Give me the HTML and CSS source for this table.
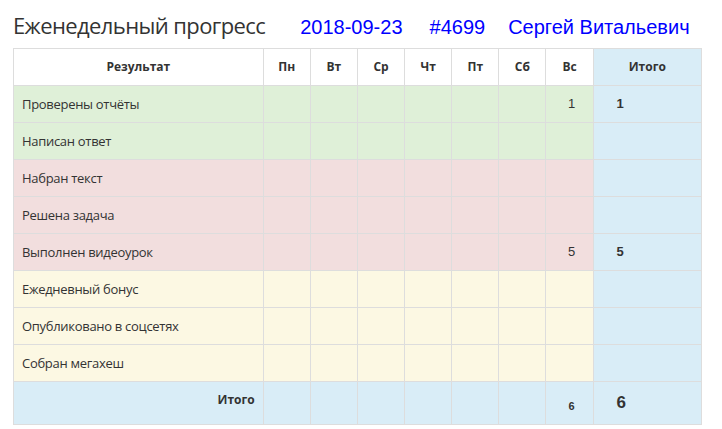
FILE: index.html
```html
<!DOCTYPE html>
<html lang="ru">

<head>
    <meta charset="utf-8" />
    <title>Еженедельный прогресс</title>
    <link rel="stylesheet" href="styles.css">
</head>

<body>
    <div class="page">
        <div class="heading">
            <span class="title">Еженедельный прогресс</span>
            <span class="meta date">2018-09-23</span>
            <span class="meta num">#4699</span>
            <span class="meta name">Сергей Витальевич</span>
        </div>
        <table class="progress">
            <colgroup>
                <col class="c-label">
                <col class="c-day">
                <col class="c-day">
                <col class="c-day">
                <col class="c-day">
                <col class="c-day">
                <col class="c-day">
                <col class="c-day">
                <col class="c-total">
            </colgroup>
            <thead>
                <tr>
                    <th>Результат</th>
                    <th>Пн</th>
                    <th>Вт</th>
                    <th>Ср</th>
                    <th>Чт</th>
                    <th>Пт</th>
                    <th>Сб</th>
                    <th>Вс</th>
                    <th class="info">Итого</th>
                </tr>
            </thead>
            <tbody>
                <tr class="success">
                    <td>Проверены отчёты</td>
                    <td></td><td></td><td></td><td></td><td></td><td></td>
                    <td class="num">1</td>
                    <td class="info total">1</td>
                </tr>
                <tr class="success">
                    <td>Написан ответ</td>
                    <td></td><td></td><td></td><td></td><td></td><td></td><td></td>
                    <td class="info total"></td>
                </tr>
                <tr class="danger">
                    <td>Набран текст</td>
                    <td></td><td></td><td></td><td></td><td></td><td></td><td></td>
                    <td class="info total"></td>
                </tr>
                <tr class="danger">
                    <td>Решена задача</td>
                    <td></td><td></td><td></td><td></td><td></td><td></td><td></td>
                    <td class="info total"></td>
                </tr>
                <tr class="danger">
                    <td>Выполнен видеоурок</td>
                    <td></td><td></td><td></td><td></td><td></td><td></td>
                    <td class="num">5</td>
                    <td class="info total">5</td>
                </tr>
                <tr class="warning">
                    <td>Ежедневный бонус</td>
                    <td></td><td></td><td></td><td></td><td></td><td></td><td></td>
                    <td class="info total"></td>
                </tr>
                <tr class="warning">
                    <td>Опубликовано в соцсетях</td>
                    <td></td><td></td><td></td><td></td><td></td><td></td><td></td>
                    <td class="info total"></td>
                </tr>
                <tr class="warning">
                    <td>Собран мегахеш</td>
                    <td></td><td></td><td></td><td></td><td></td><td></td><td></td>
                    <td class="info total"></td>
                </tr>
            </tbody>
            <tfoot>
                <tr class="info">
                    <th class="foot-label">Итого</th>
                    <td></td><td></td><td></td><td></td><td></td><td></td>
                    <td class="num small">6</td>
                    <td class="total big">6</td>
                </tr>
            </tfoot>
        </table>
    </div>
</body>

</html>
```

FILE: styles.css
```css
body {
    margin: 0;
    padding: 0;
    background: #fff;
    color: #333;
    font-family: "Open Sans", "Noto Sans", sans-serif;
    font-size: 13px;
}

.page {
    padding: 10px 13px;
}

.heading {
    display: flex;
    align-items: baseline;
    height: 38px;
    white-space: nowrap;
}

.title {
    font-size: 22px;
    letter-spacing: -0.6px;
    color: #333;
}

.meta {
    font-family: "Liberation Sans", Arial, sans-serif;
    font-size: 20px;
    color: #0000ff;
}

.date {
    margin-left: 35px;
}

.heading .num {
    margin-left: 27px;
}

.name {
    margin-left: 23px;
}

.progress {
    border-collapse: collapse;
    table-layout: fixed;
    width: 689px;
    border: 1px solid #ddd;
}

.c-label {
    width: 249px;
}

.c-day {
    width: 47px;
}

.c-total {
    width: 108px;
}

.progress th,
.progress td {
    border: 1px solid #ddd;
    padding: 8px;
    height: 20px;
    line-height: 20px;
    vertical-align: top;
}

.progress tbody td {
    letter-spacing: -0.3px;
}

.progress thead th {
    text-align: center;
    font-size: 12px;
    font-weight: bold;
    background: #fff;
}

.success td {
    background: #dff0d8;
}

.danger td {
    background: #f2dede;
}

.warning td {
    background: #fcf8e3;
}

.progress .info,
.info td,
.info th {
    background: #d9edf7;
}

.progress td.num {
    text-align: center;
    padding-left: 10px;
    padding-right: 6px;
    font-family: "Liberation Sans", Arial, sans-serif;
    font-size: 13px;
    letter-spacing: 0;
}

.progress td.total {
    padding-left: 23px;
    font-family: "Liberation Sans", Arial, sans-serif;
    font-size: 13px;
    font-weight: bold;
    letter-spacing: 0;
}

.progress .foot-label {
    text-align: right;
    font-size: 12px;
    font-weight: bold;
}

.progress td.small {
    font-size: 11px;
    font-weight: bold;
    padding-top: 14px;
}

.progress td.big {
    font-size: 17px;
    padding-top: 11px;
}
```
